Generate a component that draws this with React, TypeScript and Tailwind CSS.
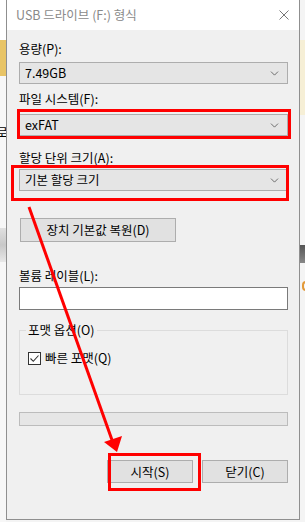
import { ChevronDown } from "lucide-react";

function Combo({ value }: { value: string }) {
  return (
    <div className="h-[22px] w-full flex items-center justify-between pl-[5px] pr-[6px] bg-[#e5e5e5] border border-[#adadad] text-black">
      <span>{value}</span>
      <ChevronDown className="w-[13px] h-[13px] text-[#3c3c3c]" strokeWidth={1.3} />
    </div>
  );
}

function Btn({ label, className }: { label: string; className: string }) {
  return (
    <div className={`flex items-center justify-center bg-[#e1e1e1] border border-[#adadad] text-black ${className}`}>
      {label}
    </div>
  );
}

export default function App() {
  return (
    <div className="relative w-[305px] h-[522px] overflow-hidden bg-[#f4f4f4] flex font-['Noto_Sans_CJK_KR','Noto_Sans',sans-serif] text-[12.5px] leading-4">
      {/* desktop behind, left edge */}
      <div className="w-[6px] shrink-0 flex flex-col bg-[#f7f7f7]">
        <div className="h-[40px] bg-white" />
        <div className="h-[36px] bg-[#e8c466]" />
        <div className="h-[48px]" />
        <div className="text-[13px] leading-4 -ml-[4px] text-black">로</div>
        <div className="h-[88px]" />
        <div className="h-[34px] bg-gradient-to-b from-[#e0e0e0] via-[#c8c8c8] to-[#e8e8e8]" />
      </div>

      {/* dialog */}
      <div className="w-[294px] h-[520px] shrink-0 flex flex-col border-x border-b border-[#8f8f8f] bg-[#f0f0f0]">
        <div className="h-[30px] shrink-0 bg-white flex items-center justify-between pl-[9px] pr-[10px]">
          <span className="text-[#8a8a8a]">USB 드라이브 (F:) 형식</span>
          <svg width="10" height="10" viewBox="0 0 10 10" className="mb-[1px]">
            <path d="M0.5 0.5 L9.5 9.5 M9.5 0.5 L0.5 9.5" stroke="#777" strokeWidth="1" />
          </svg>
        </div>

        <div className="flex flex-col pl-[12px] pr-[11px]">
          <div className="mt-[11px]">용량(P):</div>
          <div className="mt-[5px]"><Combo value="7.49GB" /></div>

          <div className="mt-[7px]">파일 시스템(F):</div>
          <div className="mt-[7px]"><Combo value="exFAT" /></div>

          <div className="mt-[14px]">할당 단위 크기(A):</div>
          <div className="mt-[3px]"><Combo value="기본 할당 크기" /></div>

          <Btn label="장치 기본값 복원(D)" className="mt-[27px] ml-[1px] w-[156px] h-[24px]" />

          <div className="mt-[26px]">볼륨 레이블(L):</div>
          <div className="mt-[3px] h-[23px] bg-white border border-[#7a7a7a]" />

          <div className="mt-[20px] h-[65px] border border-[#dcdcdc] relative flex flex-col">
            <span className="absolute -top-[9px] left-[6px] px-[2px] bg-[#f0f0f0]">포맷 옵션(O)</span>
            <div className="mt-[19px] ml-[8px] flex items-center gap-[4px]">
              <div className="w-[13px] h-[13px] border border-[#333] bg-white flex items-center justify-center">
                <svg width="11" height="11" viewBox="0 0 11 11">
                  <path d="M1.5 5.5 L4.3 8.3 L9.5 2.5" fill="none" stroke="#333" strokeWidth="1.1" />
                </svg>
              </div>
              <span>빠른 포맷(Q)</span>
            </div>
          </div>

          <div className="mt-[17px] h-[14px] bg-[#e6e6e6] border border-[#bcbcbc]" />

          <div className="mt-[34px] flex justify-end gap-[9px]">
            <Btn label="시작(S)" className="w-[86px] h-[23px]" />
            <Btn label="닫기(C)" className="w-[86px] h-[23px]" />
          </div>
        </div>
      </div>

      {/* desktop behind, right edge */}
      <div className="flex-1 flex flex-col bg-[#f4f4f4]">
        <div className="h-[40px]" />
        <div className="h-[75px] bg-[#f6efd6]" />
        <div className="h-[130px]" />
        <div className="h-[18px] bg-gradient-to-b from-[#555] to-[#888]" />
        <div className="h-[18px]" />
        <div className="ml-[2px] w-[8px] h-[10px] rounded-full border-2 border-[#e39a3a]" />
      </div>

      {/* annotations */}
      <div className="absolute left-[17px] top-[109px] w-[274px] h-[30px] border-[3px] border-[#ff0000]" />
      <div className="absolute left-[11px] top-[165px] w-[278px] h-[36px] border-[3px] border-[#ff0000]" />
      <div className="absolute left-[108px] top-[453px] w-[93px] h-[38px] border-[3px] border-[#ff0000]" />
      <svg className="absolute left-0 top-0" width="305" height="522" viewBox="0 0 305 522">
        <line x1="29" y1="207" x2="112" y2="440" stroke="#ff0000" strokeWidth="3" />
        <polygon points="104,442 122,436 117,452" fill="#ff0000" />
      </svg>
    </div>
  );
}
